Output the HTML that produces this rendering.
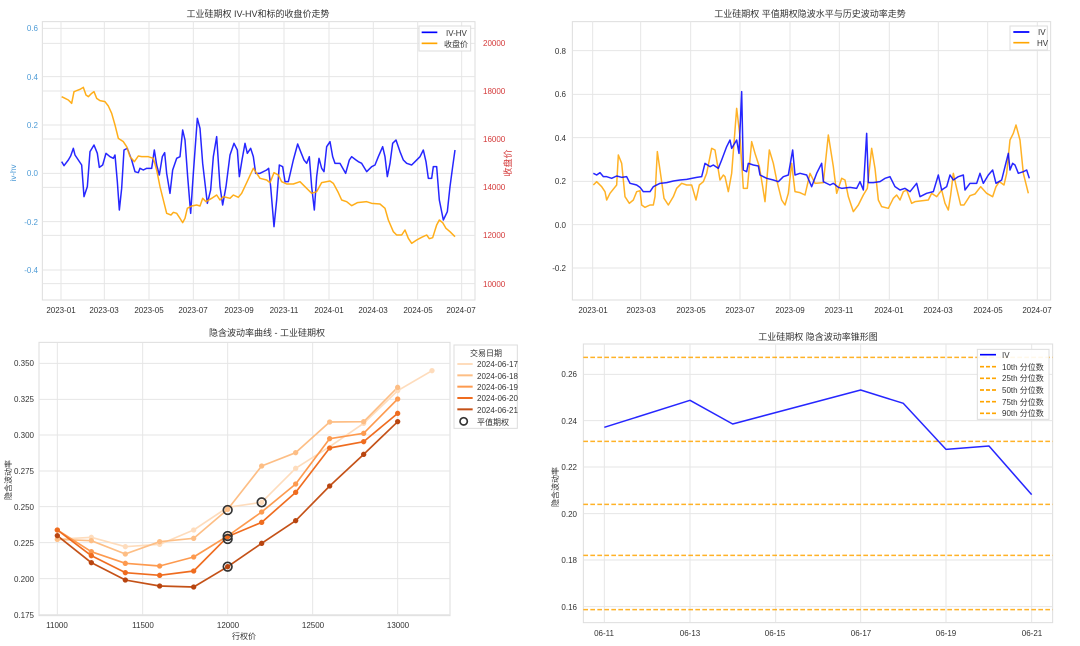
<!DOCTYPE html>
<html><head><meta charset="utf-8"><style>
html,body{margin:0;padding:0;background:#fff;width:1080px;height:646px;overflow:hidden}
svg{display:block}
text{font-family:"Liberation Sans","Noto Sans CJK SC",sans-serif;fill:#333}
.t{font-size:8px}
.ti{font-size:9px}
</style></head><body>
<svg width="1080" height="646" viewBox="0 0 1080 646">
<!-- ===== Chart 1 ===== -->
<g transform="scale(0.33333)" fill="none">
 <rect x="127" y="65" width="1298" height="835" stroke="#ddd" stroke-width="3"/>
 <g stroke="#e6e6e6" stroke-width="3">
  <path d="M127 85H1425M127 230H1425M127 375H1425M127 520H1425M127 665H1425M127 810H1425"/>
  <path d="M127 130H1425M127 273H1425M127 417H1425M127 562H1425M127 706H1425M127 851H1425"/>
  <path d="M183 65V900M313 65V900M447 65V900M580 65V900M717 65V900M852 65V900M987 65V900M1120 65V900M1253 65V900M1385 65V900"/>
 </g>
 <path stroke="#0000ff" stroke-opacity="0.85" stroke-width="4.5" stroke-linejoin="round" d="M185 485L192 497L205 480L212 468L220 445L225 465L245 495L252 590L262 560L270 455L282 435L292 460L298 502L308 495L318 460L330 470L340 475L345 465L352 545L358 630L365 565L372 450L382 445L395 480L405 515L415 518L420 505L430 510L440 505L455 505L463 450L470 495L478 525L487 470L494 458L500 520L510 580L518 510L530 475L540 470L548 390L555 420L563 530L572 640L580 520L592 355L600 385L608 490L622 610L632 570L640 470L650 410L660 560L668 615L678 560L690 465L702 430L712 450L718 530L726 480L735 430L742 460L752 445L760 470L767 520L780 520L800 510L806 505L812 560L822 680L830 600L838 495L848 500L855 545L865 545L880 480L893 432L902 455L912 480L920 490L928 470L935 560L943 630L950 530L957 475L965 505L972 515L980 440L990 425L998 470L1005 490L1020 490L1037 520L1048 480L1055 470L1068 480L1075 485L1085 490L1100 515L1115 500L1125 495L1135 470L1148 440L1155 470L1162 530L1170 490L1178 430L1188 420L1200 455L1210 480L1220 490L1235 495L1245 485L1260 470L1270 450L1278 485L1285 535L1295 535L1300 500L1310 500L1318 600L1330 660L1342 635L1350 560L1358 500L1365 450"/>
 <path stroke="#ffa500" stroke-opacity="0.9" stroke-width="4.5" stroke-linejoin="round" d="M185 290L195 295L205 300L215 310L222 275L240 268L250 262L258 285L265 290L275 280L282 275L290 295L300 302L315 305L325 318L335 340L345 375L355 415L370 425L380 440L390 470L403 485L415 468L425 470L445 470L460 475L470 510L480 560L490 600L500 640L513 645L520 637L530 640L540 655L548 668L555 655L562 625L575 618L590 615L600 618L608 595L618 605L635 595L650 585L660 600L670 590L690 595L700 585L715 592L725 580L740 548L760 505L780 535L800 540L810 548L822 518L835 525L845 545L860 552L880 552L900 545L915 560L925 570L935 580L950 575L965 548L990 543L1000 550L1015 578L1025 600L1040 605L1055 617L1072 608L1100 605L1115 610L1140 612L1155 625L1165 660L1180 695L1190 705L1205 705L1215 690L1225 715L1235 730L1250 720L1265 712L1280 705L1288 716L1298 713L1310 675L1318 660L1328 668L1338 685L1350 695L1365 710"/>
 <rect x="1257" y="78" width="155" height="75" fill="#fff" fill-opacity="0.85" stroke="#ddd" stroke-width="3"/>
 <path stroke="#0000ff" stroke-width="5" d="M1265 97H1312"/>
 <path stroke="#ffa500" stroke-width="5" d="M1265 130H1312"/>
</g>
<text x="258" y="17" class="ti" text-anchor="middle">工业硅期权 IV-HV和标的收盘价走势</text>
<g class="t" text-anchor="end" style="fill:#4d9bd6">
 <text x="38" y="31" style="fill:#4d9bd6">0.6</text><text x="38" y="80" style="fill:#4d9bd6">0.4</text><text x="38" y="128" style="fill:#4d9bd6">0.2</text><text x="38" y="176" style="fill:#4d9bd6">0.0</text><text x="38" y="225" style="fill:#4d9bd6">-0.2</text><text x="38" y="273" style="fill:#4d9bd6">-0.4</text>
</g>
<text x="0" y="0" class="t" transform="translate(16,173) rotate(-90)" text-anchor="middle" style="fill:#4d9bd6">iv-hv</text>
<g class="t" text-anchor="start">
 <text x="483" y="46" style="fill:#d43a3a">20000</text><text x="483" y="94" style="fill:#d43a3a">18000</text><text x="483" y="142" style="fill:#d43a3a">16000</text><text x="483" y="190" style="fill:#d43a3a">14000</text><text x="483" y="238" style="fill:#d43a3a">12000</text><text x="483" y="287" style="fill:#d43a3a">10000</text>
</g>
<text x="0" y="0" class="ti" transform="translate(511,163) rotate(-90)" text-anchor="middle" style="fill:#d43a3a">收盘价</text>
<text x="446" y="36" class="t">IV-HV</text>
<text x="444" y="47" class="t">收盘价</text>
<g class="t" text-anchor="middle">
 <text x="61" y="313">2023-01</text><text x="104" y="313">2023-03</text><text x="149" y="313">2023-05</text><text x="193" y="313">2023-07</text><text x="239" y="313">2023-09</text><text x="284" y="313">2023-11</text><text x="329" y="313">2024-01</text><text x="373" y="313">2024-03</text><text x="418" y="313">2024-05</text><text x="461" y="313">2024-07</text>
</g>

<!-- ===== Chart 2 ===== -->
<g transform="translate(540,0) scale(0.33333)" fill="none">
 <rect x="97" y="65" width="1435" height="835" stroke="#ddd" stroke-width="3"/>
 <g stroke="#e6e6e6" stroke-width="3">
  <path d="M97 152H1532M97 283H1532M97 413H1532M97 544H1532M97 674H1532M97 804H1532"/>
  <path d="M158 65V900M302 65V900M452 65V900M600 65V900M750 65V900M898 65V900M1048 65V900M1195 65V900M1343 65V900M1492 65V900"/>
 </g>
 <path stroke="#ffa500" stroke-opacity="0.85" stroke-width="4.5" stroke-linejoin="round" d="M160 555L170 545L185 560L195 575L200 600L210 580L230 555L235 465L245 490L255 590L268 610L280 600L290 575L300 572L305 615L315 622L330 615L340 615L345 590L352 455L360 510L372 595L385 615L400 590L410 565L425 550L440 555L455 555L468 600L478 555L490 545L500 520L515 445L525 450L540 540L550 525L555 530L565 575L575 520L590 325L600 410L610 565L622 565L635 425L645 460L658 500L668 560L675 605L688 450L700 490L710 540L725 600L735 615L745 580L755 490L765 575L780 578L795 585L810 520L825 550L850 548L865 405L880 500L890 580L905 535L915 540L925 590L940 635L955 615L970 585L982 565L995 445L1005 505L1015 600L1025 620L1045 625L1060 595L1070 585L1080 600L1090 575L1100 570L1115 610L1125 605L1140 603L1165 600L1175 580L1190 590L1205 570L1215 610L1225 630L1232 585L1240 520L1250 565L1262 615L1272 615L1290 587L1305 582L1322 560L1340 580L1358 590L1368 560L1378 545L1392 555L1400 520L1410 420L1420 400L1428 375L1440 420L1450 520L1465 580"/>
 <path stroke="#0000ff" stroke-opacity="0.85" stroke-width="4.5" stroke-linejoin="round" d="M160 520L170 525L180 518L190 530L200 530L215 535L230 528L245 532L260 530L270 550L290 555L300 562L310 575L330 575L340 560L360 550L380 548L400 543L420 540L440 538L470 532L485 530L495 490L510 500L520 495L535 505L545 480L560 440L570 420L575 445L590 420L597 460L605 275L610 510L620 515L625 490L640 495L655 498L660 525L680 535L700 540L715 545L730 530L745 525L758 450L765 525L780 520L800 525L815 560L830 520L845 490L850 545L870 555L880 550L895 562L905 565L930 562L950 565L960 545L970 570L980 400L985 548L1000 548L1020 545L1035 535L1050 530L1065 560L1080 570L1095 565L1110 575L1130 550L1140 590L1160 580L1180 575L1195 525L1205 570L1220 560L1230 525L1240 540L1255 530L1270 525L1275 570L1290 550L1310 550L1320 520L1330 550L1345 525L1358 510L1368 550L1385 540L1395 500L1405 460L1410 510L1418 490L1425 495L1435 520L1450 515L1460 510L1468 535"/>
 <rect x="1410" y="78" width="112" height="72" fill="#fff" fill-opacity="0.85" stroke="#ddd" stroke-width="3"/>
 <path stroke="#0000ff" stroke-width="5" d="M1420 96H1468"/>
 <path stroke="#ffa500" stroke-width="5" d="M1420 128H1468"/>
</g>
<text x="810" y="17" class="ti" text-anchor="middle">工业硅期权 平值期权隐波水平与历史波动率走势</text>
<g class="t" text-anchor="end">
 <text x="566" y="54">0.8</text><text x="566" y="97">0.6</text><text x="566" y="141">0.4</text><text x="566" y="184">0.2</text><text x="566" y="228">0.0</text><text x="566" y="271">-0.2</text>
</g>
<text x="1038" y="35" class="t">IV</text>
<text x="1037" y="46" class="t">HV</text>
<g class="t" text-anchor="middle">
 <text x="593" y="313">2023-01</text><text x="641" y="313">2023-03</text><text x="691" y="313">2023-05</text><text x="740" y="313">2023-07</text><text x="790" y="313">2023-09</text><text x="839" y="313">2023-11</text><text x="889" y="313">2024-01</text><text x="938" y="313">2024-03</text><text x="988" y="313">2024-05</text><text x="1037" y="313">2024-07</text>
</g>

<!-- ===== Chart 3 ===== -->
<g transform="translate(0,320) scale(0.33333)" fill="none">
 <rect x="117" y="67" width="1233" height="820" stroke="#ddd" stroke-width="3"/>
 <g stroke="#e6e6e6" stroke-width="3">
  <path d="M117 130H1350M117 238H1350M117 345H1350M117 453H1350M117 560H1350M117 668H1350M117 776H1350M117 884H1350"/>
  <path d="M172 67V887M428 67V887M683 67V887M938 67V887M1193 67V887"/>
 </g>
 <g stroke-width="5" stroke-linejoin="round">
  <path stroke="#fedcbc" d="M172 658L274 652L376 680L479 673L581 630L683 562L785 547L887 445L989 380L1091 310L1193 212L1296 152"/>
  <path stroke="#fdbe85" d="M172 658L274 662L376 702L479 665L581 655L683 568L785 438L887 398L989 306L1091 305L1193 202"/>
  <path stroke="#fd9a4f" d="M172 630L274 695L376 730L479 738L581 711L683 648L785 576L887 492L989 356L1091 340L1193 237"/>
  <path stroke="#ef6c1f" d="M172 630L274 707L376 758L479 766L581 753L683 650L785 607L887 517L989 384L1091 365L1193 280"/>
  <path stroke="#c45117" d="M172 647L274 728L376 780L479 798L581 801L683 740L785 670L887 602L989 498L1091 403L1193 305"/>
 </g>
 <g stroke="none">
  <g fill="#fedcbc"><circle cx="172" cy="658" r="8"/><circle cx="274" cy="652" r="8"/><circle cx="376" cy="680" r="8"/><circle cx="479" cy="673" r="8"/><circle cx="581" cy="630" r="8"/><circle cx="683" cy="562" r="8"/><circle cx="785" cy="547" r="8"/><circle cx="887" cy="445" r="8"/><circle cx="1091" cy="310" r="8"/><circle cx="1193" cy="212" r="8"/><circle cx="1296" cy="152" r="8"/></g>
  <g fill="#fdbe85"><circle cx="172" cy="658" r="8"/><circle cx="274" cy="662" r="8"/><circle cx="376" cy="702" r="8"/><circle cx="479" cy="665" r="8"/><circle cx="581" cy="655" r="8"/><circle cx="683" cy="568" r="8"/><circle cx="785" cy="438" r="8"/><circle cx="887" cy="398" r="8"/><circle cx="989" cy="306" r="8"/><circle cx="1091" cy="305" r="8"/><circle cx="1193" cy="202" r="8"/></g>
  <g fill="#fd9a4f"><circle cx="172" cy="630" r="8"/><circle cx="274" cy="695" r="8"/><circle cx="376" cy="730" r="8"/><circle cx="479" cy="738" r="8"/><circle cx="581" cy="711" r="8"/><circle cx="683" cy="648" r="8"/><circle cx="785" cy="576" r="8"/><circle cx="887" cy="492" r="8"/><circle cx="989" cy="356" r="8"/><circle cx="1091" cy="340" r="8"/><circle cx="1193" cy="237" r="8"/></g>
  <g fill="#ef6c1f"><circle cx="172" cy="630" r="8"/><circle cx="274" cy="707" r="8"/><circle cx="376" cy="758" r="8"/><circle cx="479" cy="766" r="8"/><circle cx="581" cy="753" r="8"/><circle cx="683" cy="650" r="8"/><circle cx="785" cy="607" r="8"/><circle cx="887" cy="517" r="8"/><circle cx="989" cy="384" r="8"/><circle cx="1091" cy="365" r="8"/><circle cx="1193" cy="280" r="8"/></g>
  <g fill="#b84510"><circle cx="172" cy="647" r="8"/><circle cx="274" cy="728" r="8"/><circle cx="376" cy="780" r="8"/><circle cx="479" cy="798" r="8"/><circle cx="581" cy="801" r="8"/><circle cx="683" cy="740" r="8"/><circle cx="785" cy="670" r="8"/><circle cx="887" cy="602" r="8"/><circle cx="989" cy="498" r="8"/><circle cx="1091" cy="403" r="8"/><circle cx="1193" cy="305" r="8"/></g>
 </g>
 <g stroke="#333" stroke-width="5">
  <circle cx="683" cy="570" r="13"/><circle cx="785" cy="547" r="13"/><circle cx="683" cy="648" r="13"/><circle cx="683" cy="657" r="13"/><circle cx="683" cy="740" r="13"/>
 </g>
 <rect x="1362" y="75" width="190" height="250" fill="#fff" stroke="#ddd" stroke-width="3"/>
 <g stroke-width="6">
  <path stroke="#fedcbc" d="M1372 132H1418"/><path stroke="#fdbe85" d="M1372 166H1418"/><path stroke="#fd9a4f" d="M1372 200H1418"/><path stroke="#ef6c1f" d="M1372 234H1418"/><path stroke="#c45117" d="M1372 268H1418"/>
 </g>
 <circle cx="1391" cy="304" r="11" stroke="#333" stroke-width="5"/>
</g>
<text x="267" y="336" class="ti" text-anchor="middle">隐含波动率曲线 - 工业硅期权</text>
<g class="t" text-anchor="end">
 <text x="34" y="366">0.350</text><text x="34" y="402">0.325</text><text x="34" y="438">0.300</text><text x="34" y="474">0.275</text><text x="34" y="510">0.250</text><text x="34" y="546">0.225</text><text x="34" y="582">0.200</text><text x="34" y="618">0.175</text>
</g>
<text x="0" y="0" class="t" transform="translate(11,480) rotate(-90)" text-anchor="middle">隐含波动率</text>
<g class="t" text-anchor="middle">
 <text x="57" y="628">11000</text><text x="143" y="628">11500</text><text x="228" y="628">12000</text><text x="313" y="628">12500</text><text x="398" y="628">13000</text>
</g>
<text x="244" y="639" class="t" text-anchor="middle">行权价</text>
<text x="486" y="356" class="t" text-anchor="middle">交易日期</text>
<g class="t"><text x="477" y="367">2024-06-17</text><text x="477" y="379">2024-06-18</text><text x="477" y="390">2024-06-19</text><text x="477" y="401">2024-06-20</text><text x="477" y="413">2024-06-21</text><text x="477" y="425">平值期权</text></g>

<!-- ===== Chart 4 ===== -->
<g transform="translate(540,320) scale(0.33333)" fill="none">
 <rect x="130" y="72" width="1408" height="836" stroke="#ddd" stroke-width="3"/>
 <g stroke="#e6e6e6" stroke-width="3">
  <path d="M130 163H1538M130 302H1538M130 441H1538M130 581H1538M130 720H1538M130 860H1538"/>
  <path d="M193 72V908M450 72V908M707 72V908M962 72V908M1218 72V908M1475 72V908"/>
 </g>
 <g stroke="#ffa500" stroke-opacity="0.85" stroke-width="4.5" stroke-dasharray="14 7">
  <path d="M130 112H1538M130 364H1538M130 553H1538M130 706H1538M130 869H1538"/>
 </g>
 <path stroke="#0000ff" stroke-opacity="0.85" stroke-width="4.5" stroke-linejoin="round" d="M193 322L450 241L578 312L962 210L1090 250L1218 388L1347 378L1475 524"/>
 <rect x="1312" y="88" width="215" height="210" fill="#fff" fill-opacity="0.9" stroke="#ddd" stroke-width="3"/>
 <path stroke="#0000ff" stroke-width="5" d="M1320 104H1368"/>
 <g stroke="#ffa500" stroke-width="5" stroke-dasharray="12 6"><path d="M1320 140H1368M1320 175H1368M1320 210H1368M1320 245H1368M1320 280H1368"/></g>
</g>
<text x="818" y="340" class="ti" text-anchor="middle">工业硅期权 隐含波动率锥形图</text>
<g class="t" text-anchor="end">
 <text x="577" y="377">0.26</text><text x="577" y="424">0.24</text><text x="577" y="470">0.22</text><text x="577" y="517">0.20</text><text x="577" y="563">0.18</text><text x="577" y="610">0.16</text>
</g>
<text x="0" y="0" class="t" transform="translate(558,487) rotate(-90)" text-anchor="middle">隐含波动率</text>
<g class="t" text-anchor="middle">
 <text x="604" y="636">06-11</text><text x="690" y="636">06-13</text><text x="775" y="636">06-15</text><text x="861" y="636">06-17</text><text x="946" y="636">06-19</text><text x="1032" y="636">06-21</text>
</g>
<g class="t"><text x="1002" y="358">IV</text><text x="1002" y="370">10th 分位数</text><text x="1002" y="381">25th 分位数</text><text x="1002" y="393">50th 分位数</text><text x="1002" y="405">75th 分位数</text><text x="1002" y="416">90th 分位数</text></g>
</svg>
</body></html>
